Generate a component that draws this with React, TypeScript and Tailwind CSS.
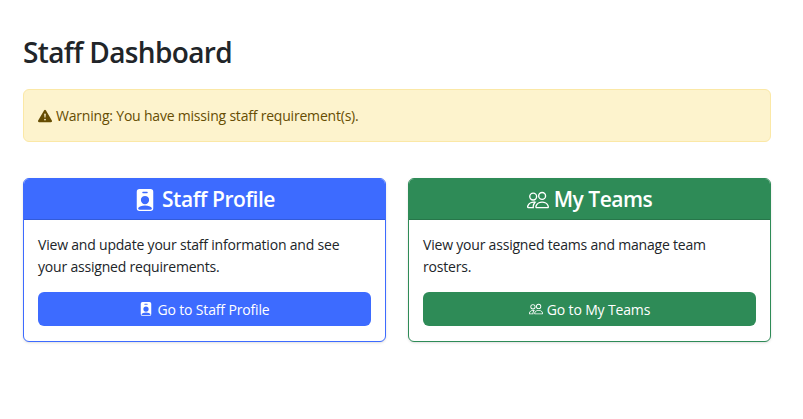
import { BsExclamationTriangleFill, BsPeople, BsPersonBadgeFill } from "react-icons/bs";

export default function App() {
  return (
    <div className="min-h-[419px] bg-white font-['Open_Sans','Noto_Sans',sans-serif] text-[#212529]">
      <div className="ml-[23px] w-[748px] pt-[33px]">
        <h1 className="mb-[18px] text-[28px] leading-[38px] font-semibold tracking-[-0.65px]">Staff Dashboard</h1>

        {/* 警告 */}
        <div className="flex h-[53px] items-center gap-1 rounded-md border border-[#fbe8a6] bg-[#fdf3cd] px-[14px] text-[14px] text-[#664d03]">
          <BsExclamationTriangleFill className="h-[14px] w-[14px]" />
          <span className="tracking-[-0.2px]">Warning: You have missing staff requirement(s).</span>
        </div>

        <div className="mt-9 grid grid-cols-2 gap-[22px]">
          {/* スタッフ */}
          <div className="h-[164px] overflow-hidden rounded-md border border-[#3d6bff] bg-white shadow-sm">
            <div className="flex h-[41px] items-center justify-center gap-[6px] border-b border-black/15 bg-[#3d6bff] pt-px text-[21px] font-semibold tracking-[-0.45px] text-white">
              <BsPersonBadgeFill className="h-[22px] w-[22px]" />
              Staff Profile
            </div>
            <div className="flex flex-col px-[14px] pt-[14px]">
              <p className="h-[58px] text-[14px] leading-[22px] tracking-[-0.2px]">
                View and update your staff information and see your assigned requirements.
              </p>
              <a className="flex h-[34px] items-center justify-center gap-1 rounded-md bg-[#3d6bff] text-[14px] tracking-[-0.15px] text-white">
                <BsPersonBadgeFill className="h-[14px] w-[14px]" />
                Go to Staff Profile
              </a>
            </div>
          </div>

          {/* チーム */}
          <div className="h-[164px] overflow-hidden rounded-md border border-[#2e8b57] bg-white shadow-sm">
            <div className="flex h-[41px] items-center justify-center gap-[5px] border-b border-black/15 bg-[#2e8b57] pt-px text-[21px] font-semibold tracking-[-0.5px] text-white">
              <BsPeople className="h-[22px] w-[22px]" />
              My Teams
            </div>
            <div className="flex flex-col px-[14px] pt-[14px]">
              <p className="h-[58px] text-[14px] leading-[22px] tracking-[-0.2px]">
                View your assigned teams and manage team rosters.
              </p>
              <a className="flex h-[34px] items-center justify-center gap-1 rounded-md bg-[#2e8b57] text-[14px] tracking-[-0.15px] text-white">
                <BsPeople className="h-[14px] w-[14px]" />
                Go to My Teams
              </a>
            </div>
          </div>
        </div>
      </div>
    </div>
  );
}
